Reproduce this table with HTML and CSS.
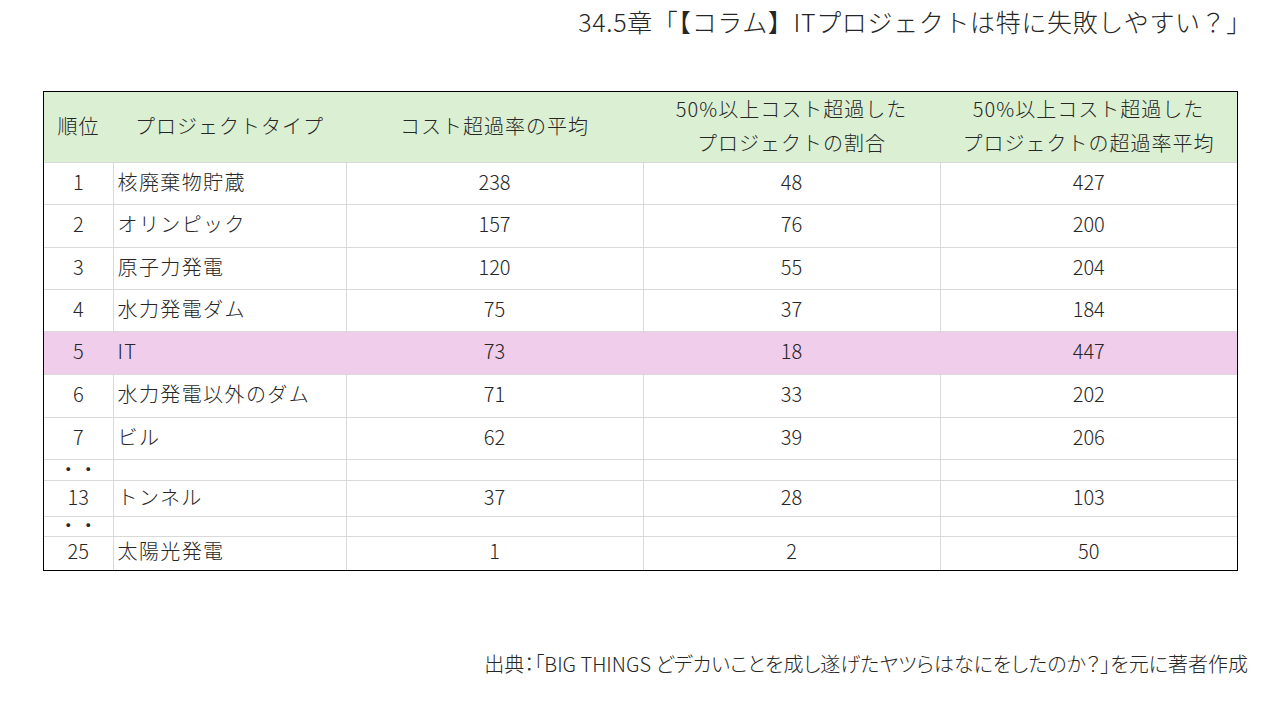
FILE: index.html
```html
<!DOCTYPE html>
<html lang="ja">
<head>
<meta charset="utf-8">
<link rel="stylesheet" href="styles.css">
</head>
<body>
<div class="page">
  <h1 class="title">34.5章「【コラム】ITプロジェクトは特に失敗しやすい？」</h1>
  <div class="frame">
  <table class="data">
    <colgroup>
      <col class="c-rank"><col class="c-name"><col class="c-num"><col class="c-num"><col class="c-num">
    </colgroup>
    <thead>
      <tr class="head">
        <th>順位</th>
        <th>プロジェクトタイプ</th>
        <th>コスト超過率の平均</th>
        <th>50%以上コスト超過した<br>プロジェクトの割合</th>
        <th>50%以上コスト超過した<br>プロジェクトの超過率平均</th>
      </tr>
    </thead>
    <tbody>
      <tr class="r42"><td>1</td><td class="name">核廃棄物貯蔵</td><td>238</td><td>48</td><td>427</td></tr>
      <tr class="r43"><td>2</td><td class="name">オリンピック</td><td>157</td><td>76</td><td>200</td></tr>
      <tr class="r42"><td>3</td><td class="name">原子力発電</td><td>120</td><td>55</td><td>204</td></tr>
      <tr class="r42"><td>4</td><td class="name">水力発電ダム</td><td>75</td><td>37</td><td>184</td></tr>
      <tr class="r43 hl"><td>5</td><td class="name">IT</td><td>73</td><td>18</td><td>447</td></tr>
      <tr class="r43"><td>6</td><td class="name">水力発電以外のダム</td><td>71</td><td>33</td><td>202</td></tr>
      <tr class="r42"><td>7</td><td class="name">ビル</td><td>62</td><td>39</td><td>206</td></tr>
      <tr class="gap1"><td class="dots">・・</td><td></td><td></td><td></td><td></td></tr>
      <tr class="r36"><td>13</td><td class="name">トンネル</td><td>37</td><td>28</td><td>103</td></tr>
      <tr class="gap2"><td class="dots">・・</td><td></td><td></td><td></td><td></td></tr>
      <tr class="r34"><td>25</td><td class="name">太陽光発電</td><td>1</td><td>2</td><td>50</td></tr>
    </tbody>
  </table>
  </div>
  <p class="source">出典：「BIG THINGS どデカいことを成し遂げたヤツらはなにをしたのか？」を元に著者作成</p>
</div>
</body>
</html>
```

FILE: styles.css
```css
* { box-sizing: border-box; }
html, body { margin: 0; padding: 0; background: #ffffff; }
body {
  font-family: "Noto Sans CJK JP", "Noto Sans", sans-serif;
  font-weight: 300;
  color: #262626;
  width: 1280px;
  height: 720px;
  overflow: hidden;
}
.page { display: flex; flex-direction: column; }
.title {
  margin: 0;
  padding-right: 28px;
  height: 46px;
  line-height: 42px;
  font-size: 25px;
  font-weight: 300;
  letter-spacing: 0.65px;
  text-align: right;
}
.frame {
  margin: 45px 0 0 43px;
  width: 1195px;
  border: 1px solid #000;
}
.data {
  width: 100%;
  border-collapse: collapse;
  table-layout: fixed;
  border-style: hidden;
  font-size: 20px;
}
.c-rank { width: 69px; }
.c-name { width: 233px; }
.c-num { width: 297px; }
.head { height: 70px; }
.data th {
  background: #dbf0d3;
  font-weight: 300;
  line-height: 34px;
  text-align: center;
  padding: 0 0 2px 0;
  letter-spacing: 1px;
}
.data td {
  border: 1px solid #d9d9d9;
  text-align: center;
  padding: 0 0 4px 0;
  line-height: 24px;
}
.data td.name { text-align: left; padding-left: 4px; letter-spacing: 1.4px; }
.data td.dots { font-size: 20px; line-height: 13px; padding: 0 0 4px 0; letter-spacing: 0; }
.r42 { height: 42px; }
.r43 { height: 43px; }
.r36 { height: 36px; }
.r34 { height: 33px; }
.gap1 { height: 21px; }
.gap2 { height: 20px; }
.hl td {
  background: #f0cdeb;
  border-left-color: #f0cdeb;
  border-right-color: #f0cdeb;
}
.source {
  margin: 78px 0 0 0;
  padding-right: 32px;
  text-align: right;
  font-size: 20px;
  line-height: 30px;
  font-feature-settings: "palt";
}
```
